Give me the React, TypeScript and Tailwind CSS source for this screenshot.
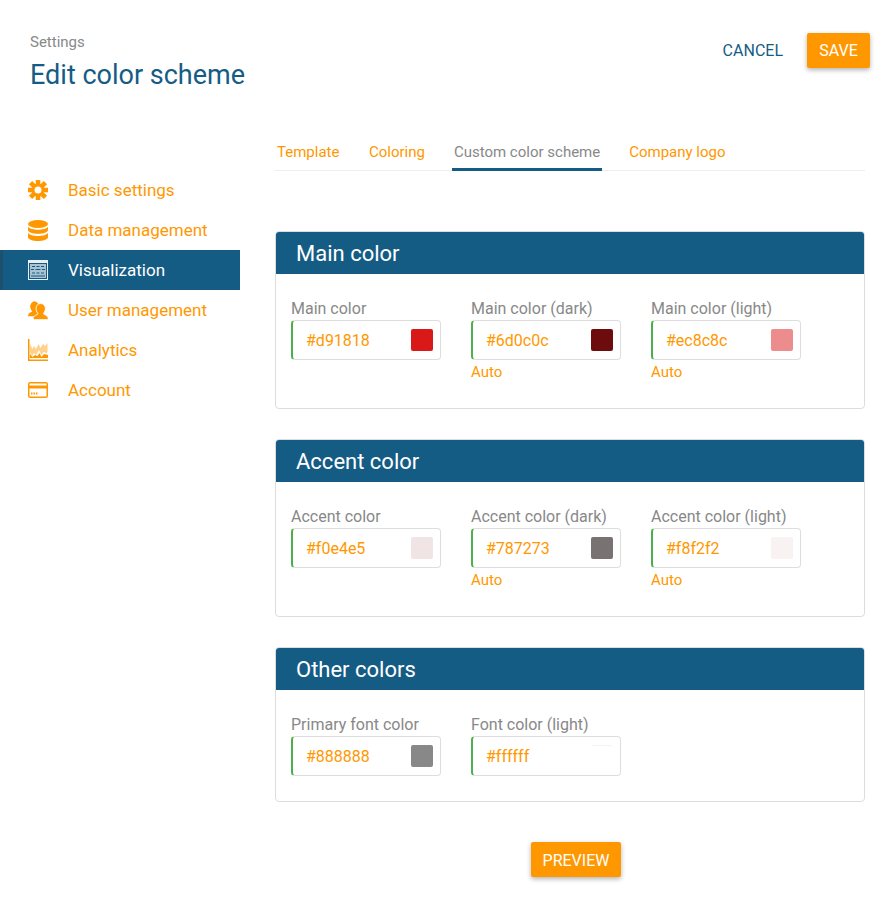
import React from 'react';

const navItems = [
  { label: 'Basic settings', icon: 'gear' },
  { label: 'Data management', icon: 'db' },
  { label: 'Visualization', icon: 'viz', active: true },
  { label: 'User management', icon: 'users' },
  { label: 'Analytics', icon: 'chart' },
  { label: 'Account', icon: 'card' },
];

const tabs = ['Template', 'Coloring', 'Custom color scheme', 'Company logo'];

const sections = [
  {
    title: 'Main color',
    fields: [
      { label: 'Main color', value: '#d91818', swatch: 'bg-[#d91818]' },
      { label: 'Main color (dark)', value: '#6d0c0c', swatch: 'bg-[#6d0c0c]', auto: true },
      { label: 'Main color (light)', value: '#ec8c8c', swatch: 'bg-[#ec8c8c]', auto: true },
    ],
  },
  {
    title: 'Accent color',
    fields: [
      { label: 'Accent color', value: '#f0e4e5', swatch: 'bg-[#f0e4e5]' },
      { label: 'Accent color (dark)', value: '#787273', swatch: 'bg-[#787273]', auto: true },
      { label: 'Accent color (light)', value: '#f8f2f2', swatch: 'bg-[#f8f2f2]', auto: true },
    ],
  },
  {
    title: 'Other colors',
    fields: [
      { label: 'Primary font color', value: '#888888', swatch: 'bg-[#888888]' },
      { label: 'Font color (light)', value: '#ffffff', swatch: 'bg-white border-t border-t-[#f3f3f3]' },
    ],
  },
];

const NavIcon = ({ name }: { name: string }) => {
  if (name === 'gear') {
    return (
      <svg width="20" height="20" viewBox="0 0 20 20" fill="currentColor">
        {[0, 45, 90, 135].map((angle) => (
          <rect key={angle} x="7.700" y="-0.500" width="4.600" height="21" transform={`rotate(${angle} 10 10)`} />
        ))}
        <circle cx="10" cy="10" r="6.400" />
        <circle cx="10" cy="10" r="3.500" fill="#ffffff" />
      </svg>
    );
  }
  if (name === 'db') {
    return (
      <svg width="20" height="21" viewBox="0 0 20 21" fill="currentColor">
        <ellipse cx="10" cy="4" rx="10" ry="4" />
        <path d="M0 6.600C1.500 9.200 6 9.800 10 9.800s8.500-.6 10-3.200v3.300c0 2.400-5 3.800-10 3.800S0 12.300 0 9.900z" />
        <path d="M0 12.800c1.500 2.600 6 3.200 10 3.200s8.500-.6 10-3.200V17c0 2.500-5 4-10 4S0 19.500 0 17z" />
      </svg>
    );
  }
  if (name === 'viz') {
    return (
      <svg width="20" height="20" viewBox="0 0 20 20" fill="none">
        <rect x="0.500" y="0.500" width="19" height="19" stroke="#e8eef2" strokeWidth="1" />
        <rect x="1" y="1" width="18" height="2" fill="#e8eef2" />
        <rect x="2" y="4" width="16" height="14" fill="#a9c3d3" />
        <path d="M4 6.500h3M8.500 6.500h3M13 6.500h3M3 9.500h3M7.500 9.500h5M14 9.500h3M4 13h3M8.500 13h3M13 13h3M3 16h14" stroke="#155c85" strokeWidth="1.200" />
      </svg>
    );
  }
  if (name === 'users') {
    return (
      <svg width="23" height="21" viewBox="0 0 23 21" fill="currentColor">
        <ellipse cx="7.500" cy="6" rx="5" ry="6" />
        <path d="M5 10h5v2l3 2-5 3H0c0-3 2.200-4 4-4.800 1-.4 1-1.200 1-2.200z" />
        <path d="M14.500 2.500c3.400 0 5.500 2.500 5.500 5.800 0 2.100-.7 3.900-1.800 5-.6.800-.3 1.500.6 1.900 2.200 1 4.500 1.600 4.700 5.800H5.800c.2-4.200 2.500-4.800 4.700-5.800.9-.4 1.200-1.100.6-1.900-1.100-1.100-1.800-2.900-1.800-5 0-3.300 1.800-5.800 5.200-5.800z" stroke="#ffffff" strokeWidth="1" />
      </svg>
    );
  }
  if (name === 'chart') {
    return (
      <svg width="20" height="22" viewBox="0 0 20 22" fill="none">
        <path d="M2 19V5l2.500 5L6 7l2 3 2.500-5 2 4 2.500-4 2 2 2.500-3v15z" fill="currentColor" fillOpacity="0.45" />
        <path d="M2 13l2 4 2-3 2 2 3-5 2.500 5 2-3 3 1 1.500-1v8H2z" fill="#ffffff" />
        <path d="M2 15l2.500 3L7 16l2.500 1 2-3 2 4 2.500-3 4 1v3H2z" fill="currentColor" />
        <path d="M.75 0v21.250H20" stroke="currentColor" strokeWidth="1.500" />
      </svg>
    );
  }
  return (
    <svg width="20" height="16" viewBox="0 0 20 16" fill="none" stroke="currentColor">
      <rect x="0.750" y="0.750" width="18.500" height="14.500" rx="1.500" strokeWidth="1.500" />
      <path d="M1 5h18" strokeWidth="3" />
      <path d="M3 11.500h1.500M5.500 11.500H7M8 11.500h1.500" strokeWidth="2" />
    </svg>
  );
};

const ColorField = ({ field }: { field: { label: string; value: string; swatch: string; auto?: boolean } }) => (
  <div className="w-[150px]">
    <div className="text-[16px] leading-[20px] text-[#888888]">{field.label}</div>
    <div className="mt-[1px] h-[40px] flex items-center justify-between pl-[13px] pr-[7px] rounded-[4px] border border-[#dddddd] border-l-[2px] border-l-[#4caf50]">
      <span className="pt-[1px] text-[16px] text-[#ff9800]">{field.value}</span>
      <span className={`w-[22px] h-[22px] rounded-[2px] ${field.swatch}`}></span>
    </div>
    {field.auto && <div className="mt-[2px] text-[15px] leading-[20px] text-[#ff9800]">Auto</div>}
  </div>
);

export default function App() {
  return (
    <div className="w-[895px] h-[914px] bg-white font-['Roboto',sans-serif]">
      <div className="flex justify-between pl-[30px] pr-[25px] pt-[33px] h-[135px]">
        <div>
          <div className="text-[15px] leading-[18px] text-[#888888]">Settings</div>
          <h1 className="mt-[6px] text-[27px] leading-[36px] text-[#155c85]">Edit color scheme</h1>
        </div>
        <div className="flex items-start gap-[16px]">
          <button className="h-[35px] px-[8px] text-[16px] text-[#155c85]">CANCEL</button>
          <button className="h-[35px] w-[63px] rounded-[2px] bg-[#ff9800] text-[16px] text-white shadow-[0_2px_5px_rgba(0,0,0,0.3)]">SAVE</button>
        </div>
      </div>

      <div className="flex">
        <nav className="w-[240px] pt-[35px]">
          {navItems.map((item) => (
            <div
              key={item.label}
              className={`h-[40px] flex items-center text-[17px] ${item.active ? 'bg-[#155c85] text-white border-l-[3px] border-l-[#1d4f6e]' : 'text-[#ff9800]'}`}
            >
              <span className={`flex w-[20px] ${item.active ? 'ml-[25px]' : 'ml-[28px]'}`}>
                <NavIcon name={item.icon} />
              </span>
              <span className="ml-[20px] pt-[2px]">{item.label}</span>
            </div>
          ))}
        </nav>

        <main className="ml-[35px] w-[590px]">
          <div className="flex border-b border-[#eeeeee] h-[36px] gap-[25px]">
            {tabs.map((tab) => (
              <div
                key={tab}
                className={`h-[36px] px-[2px] pt-[6px] text-[15px] leading-[22px] ${tab === 'Coloring' ? 'ml-[0.5px]' : ''} ${tab === 'Custom color scheme' ? 'text-[#888888] border-b-[3px] border-b-[#155c85]' : 'text-[#ff9800]'}`}
              >
                {tab}
              </div>
            ))}
          </div>

          <div className="mt-[60px] flex flex-col gap-[30px]">
            {sections.map((section) => (
              <section key={section.title} className="rounded-[4px] border border-[#dddddd] overflow-hidden">
                <div className="h-[42px] bg-[#155c85] pl-[20px] flex items-center text-[22px] text-white">{section.title}</div>
                <div className={`flex gap-[30px] pl-[15px] pt-[25px] ${section.fields.length === 3 ? 'h-[134px]' : 'h-[111px]'}`}>
                  {section.fields.map((field) => (
                    <ColorField key={field.label} field={field} />
                  ))}
                </div>
              </section>
            ))}
          </div>

          <div className="mt-[40px] flex justify-center">
            <button className="h-[35px] w-[90px] ml-[12px] pt-[2px] rounded-[2px] bg-[#ff9800] text-[16px] text-white shadow-[0_2px_5px_rgba(0,0,0,0.3)]">PREVIEW</button>
          </div>
        </main>
      </div>
    </div>
  );
}
